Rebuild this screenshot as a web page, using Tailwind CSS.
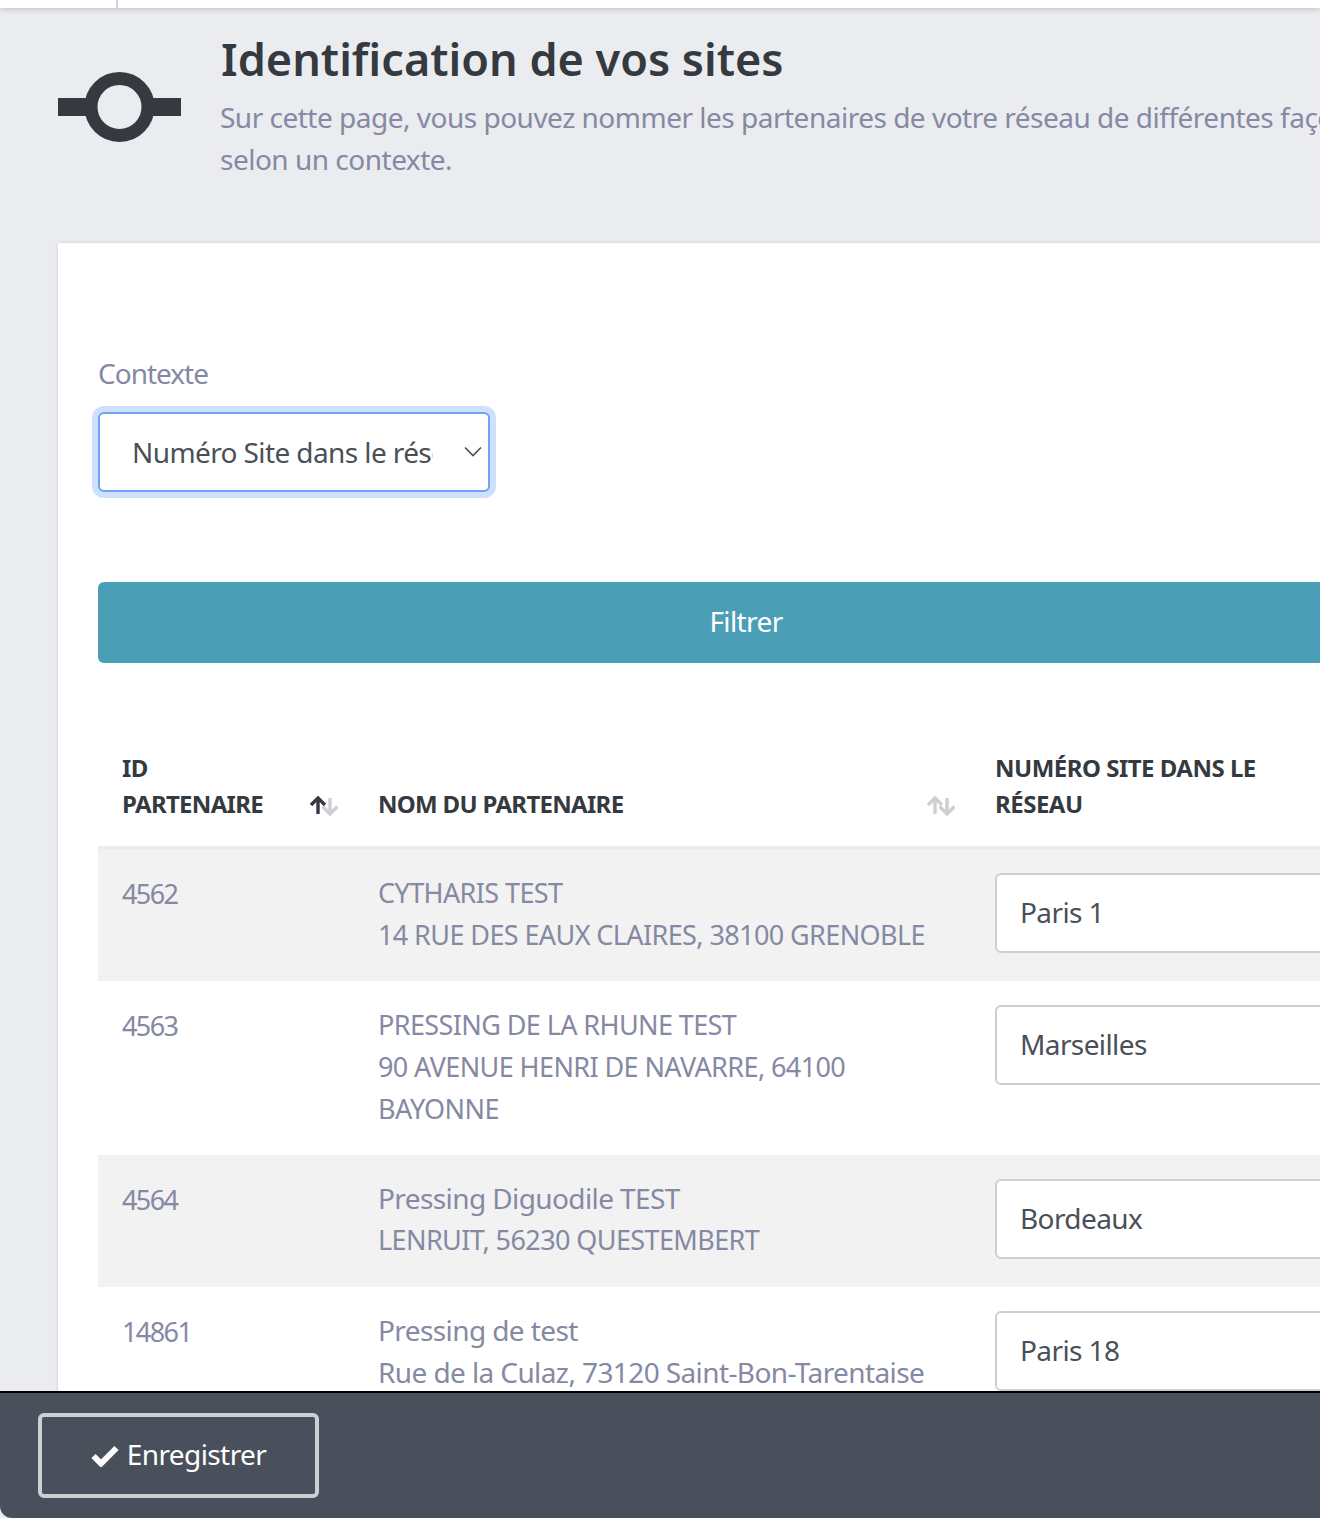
<!DOCTYPE html>
<html lang="fr">
<head>
  <meta charset="UTF-8">
  <title>Identification de vos sites</title>
  <script src="https://cdn.jsdelivr.net/npm/@tailwindcss/browser@4"></script>
</head>
<body class="bg-[#ebecf0] font-['Noto_Sans',sans-serif] text-[28px] leading-[42px] tracking-[-0.6px] text-[#8589a3]">
  <div class="relative h-[1518px] w-[1320px] overflow-hidden">
    <!-- top bar -->
    <div class="h-2 w-full bg-white shadow-[0_1px_6px_rgba(0,0,0,0.2)]">
      <div class="ml-[116px] h-2 w-[2px] bg-[#d5d6da]"></div>
    </div>

    <div class="w-[1492px] pl-[58px] pr-[58px]">
      <!-- header -->
      <header class="flex h-[235px] items-start">
        <svg class="mt-[64px] h-[70px] w-[123px] shrink-0" viewBox="0 0 123 70">
          <rect x="0" y="26" width="123" height="18" fill="#343a40"></rect>
          <circle cx="61.5" cy="35" r="28.5" fill="#ebecf0" stroke="#343a40" stroke-width="13"></circle>
        </svg>
        <div class="ml-10 pt-[21px]">
          <h1 class="text-[45px] leading-[60px] font-semibold tracking-normal text-[#343a40]">Identification de vos sites</h1>
          <p class="mt-[7px] -ml-px tracking-[-0.5px]">Sur cette page, vous pouvez nommer les partenaires de votre réseau de différentes façons<br>selon un contexte.</p>
        </div>
      </header>

      <!-- card -->
      <main class="bg-white px-10 pt-[109px] pb-10 shadow-[0_0_4px_rgba(0,0,0,0.12)]">
        <label class="block tracking-[-1px]">Contexte</label>
        <div class="relative mt-[18px] w-[392px]">
          <select class="block h-20 w-full appearance-none rounded-[6px] border-2 border-[#6ea3f2] bg-white pl-[32px] pr-[55px] text-[#495057] shadow-[0_0_0_6px_#cfe0fc] outline-none">
            <option>Numéro Site dans le réseau</option>
          </select>
          <svg class="absolute right-[7px] top-[34px] h-3 w-5" viewBox="0 0 20 12" fill="none" stroke="#495057" stroke-width="1.6">
            <path d="M2 1.5l8 8 8-8"></path>
          </svg>
        </div>

        <button class="mt-[90px] block h-[81px] w-full rounded-[6px] bg-[#4a9fb6] pb-1 text-white">Filtrer</button>

        <table class="mt-[87px] w-full table-fixed border-collapse">
          <colgroup>
            <col class="w-[256px]">
            <col class="w-[617px]">
            <col>
          </colgroup>
          <thead>
            <tr class="border-b-[3px] border-[#ebecf0] text-left align-bottom text-[24px] leading-[36px] font-bold tracking-[-0.7px] text-[#343a40] uppercase">
              <th class="pb-6 pl-6 pr-4">
                <div class="flex items-end justify-between">
                  <span class="block w-[150px]">ID Partenaire</span>
                  <svg class="mb-[6px] h-5 w-7" viewBox="0 0 28 20" fill="none" stroke-width="3.4">
                    <path d="M20 2v16M12.500 10.500L20 18l7.500-7.500" stroke="#cdcfd2"></path>
                    <path d="M8 18V2M1 9l7-7 7 7" stroke="#343a40"></path>
                  </svg>
                </div>
              </th>
              <th class="pb-6 pl-6 pr-4">
                <div class="flex items-end justify-between">
                  <span>Nom du partenaire</span>
                  <svg class="mb-[6px] h-5 w-7" viewBox="0 0 28 20" fill="none" stroke-width="3.400">
                    <path d="M8 18V2M1 9l7-7 7 7" stroke="#cdcfd2"></path>
                    <path d="M20 2v16M12.500 10.500L20 18l7.500-7.500" stroke="#cdcfd2"></path>
                  </svg>
                </div>
              </th>
              <th class="pb-6 pl-6 tracking-[-0.5px]">Numéro site dans le<br>réseau</th>
            </tr>
          </thead>
          <tbody class="align-top">
            <tr class="bg-[#f2f2f2]">
              <td class="py-6 pl-6 text-[27px] tracking-[-1.6px]">4562</td>
              <td class="pt-[23px] pb-[25px] pl-6">
                <div class="text-[27px] tracking-[-0.6px]">CYTHARIS TEST</div>
                <div class="text-[27px] tracking-[-0.6px]">14 RUE DES EAUX CLAIRES, 38100 GRENOBLE</div>
              </td>
              <td class="py-6 pl-6 pr-6"><input class="h-20 w-full rounded-[6px] border-2 border-[#cdcfd2] bg-white pl-[23px] pr-6 pb-[2px] text-[#495057]" value="Paris 1"></td>
            </tr>
            <tr>
              <td class="py-6 pl-6 text-[27px] tracking-[-1.6px]">4563</td>
              <td class="pt-[23px] pb-[25px] pl-6">
                <div class="text-[27px] tracking-[-0.6px]">PRESSING DE LA RHUNE TEST</div>
                <div class="text-[27px] tracking-[-0.6px]">90 AVENUE HENRI DE NAVARRE, 64100</div>
                <div class="text-[27px] tracking-[-0.6px]">BAYONNE</div>
              </td>
              <td class="py-6 pl-6 pr-6"><input class="h-20 w-full rounded-[6px] border-2 border-[#cdcfd2] bg-white pl-[23px] pr-6 pb-[2px] text-[#495057]" value="Marseilles"></td>
            </tr>
            <tr class="bg-[#f2f2f2]">
              <td class="py-6 pl-6 text-[27px] tracking-[-1.6px]">4564</td>
              <td class="pt-[22px] pb-[26px] pl-6">
                <div>Pressing Diguodile TEST</div>
                <div class="text-[27px] tracking-[-0.6px]">LENRUIT, 56230 QUESTEMBERT</div>
              </td>
              <td class="py-6 pl-6 pr-6"><input class="h-20 w-full rounded-[6px] border-2 border-[#cdcfd2] bg-white pl-[23px] pr-6 pb-[2px] text-[#495057]" value="Bordeaux"></td>
            </tr>
            <tr>
              <td class="py-6 pl-6 text-[27px] tracking-[-1.6px]">14861</td>
              <td class="pt-[22px] pb-[26px] pl-6">
                <div>Pressing de test</div>
                <div>Rue de la Culaz, 73120 Saint-Bon-Tarentaise</div>
              </td>
              <td class="py-6 pl-6 pr-6"><input class="h-20 w-full rounded-[6px] border-2 border-[#cdcfd2] bg-white pl-[23px] pr-6 pb-[2px] text-[#495057]" value="Paris 18"></td>
            </tr>
          </tbody>
        </table>
      </main>
    </div>

    <!-- save bar -->
    <footer class="absolute bottom-0 left-0 flex h-[127px] w-full items-start rounded-bl-[12px] border-t-2 border-black bg-[#4a505b] pl-[38px] pt-5">
      <button class="flex h-[85px] w-[281px] items-center justify-center gap-[8px] rounded-[6px] border-4 border-[#cdcfd2] pb-1 text-white">
        <svg class="mt-1 h-[22px] w-7" viewBox="0 0 28 22" fill="none" stroke="#fff" stroke-width="6">
          <path d="M2.500 11l7.500 7.500L25.500 3"></path>
        </svg>
        Enregistrer
      </button>
    </footer>
  </div>
</body>
</html>
